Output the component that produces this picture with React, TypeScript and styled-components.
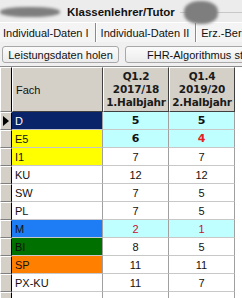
import React from "react";
import styled, { createGlobalStyle } from "styled-components";

const Global = createGlobalStyle`
  html, body { margin: 0; padding: 0; }
  body {
    width: 242px; height: 298px; overflow: hidden;
    background: #f0f0f0;
    font-family: "Liberation Sans", Arial, sans-serif;
  }
`;

const Page = styled.div`
  display: flex;
  flex-direction: column;
  width: 242px;
  height: 298px;
  overflow: hidden;
`;

const TitleBar = styled.div`
  position: relative;
  height: 22px;
  flex: 0 0 22px;
  box-sizing: border-box;
  display: flex;
  align-items: flex-start;
  padding: 4px 0 0 67px;
  background: #ececec;
`;

const TitleLine = styled.div`
  position: absolute;
  left: 180px;
  right: 0;
  top: 12px;
  height: 1px;
  background: #c8c8c8;
`;

const TitleText = styled.span`
  position: relative;
  z-index: 1;
  font-weight: bold;
  font-size: 11.5px;
  line-height: 16px;
  color: #111;
  white-space: nowrap;
`;

const Smudge = styled.span<{ $left: number; $width: number; $top: number; $h: number }>`
  position: absolute;
  z-index: 2;
  left: ${(p) => p.$left}px;
  top: ${(p) => p.$top}px;
  width: ${(p) => p.$width}px;
  height: ${(p) => p.$h}px;
  border-radius: 45%;
  background: #7e7e7e;
  filter: blur(1.5px);
`;

const TabStrip = styled.div`
  height: 20px;
  flex: 0 0 20px;
  box-sizing: border-box;
  display: flex;
  align-items: stretch;
  border-top: 1px solid #ffffff;
  background: #f4f4f4;
  overflow: hidden;
`;

const Tab = styled.div`
  display: flex;
  align-items: center;
  padding: 1px 6px 0 3px;
  font-size: 11px;
  color: #111;
  white-space: nowrap;
  border-right: 1px solid #8a8a8a;
  box-shadow: 1px 0 0 #ffffff;
  margin-right: 2px;
`;

const ButtonRow = styled.div`
  display: flex;
  gap: 6px;
  padding: 4px 0 0 2px;
  flex: 0 0 21px;
  box-sizing: border-box;
  white-space: nowrap;
  overflow: hidden;
`;

const Button = styled.div<{ $w: number; $pad?: number }>`
  flex: 0 0 ${(p) => p.$w}px;
  height: 17px;
  box-sizing: border-box;
  border: 1px solid #a8a8a8;
  border-radius: 3px;
  background: linear-gradient(#fbfbfb, #ececec);
  font-size: 11px;
  color: #111;
  display: flex;
  align-items: center;
  justify-content: ${(p) => (p.$pad ? "flex-start" : "center")};
  padding-left: ${(p) => p.$pad || 0}px;
  overflow: hidden;
`;

const Grid = styled.div`
  margin-top: 3px;
  flex: 1;
  background: #ffffff;
  display: flex;
  flex-direction: column;
  border-top: 1px solid #8a8a8a;
`;

const Row = styled.div<{ $h: number }>`
  display: grid;
  grid-template-columns: 12px 91px 66px 66px;
  height: ${(p) => p.$h}px;
  flex: 0 0 auto;
`;

const Indicator = styled.div`
  background: #d4d0c8;
  border-top: 1px solid #ffffff;
  border-left: 1px solid #ffffff;
  border-bottom: 1px solid #808080;
  border-right: 1px solid #000000;
  display: flex;
  align-items: center;
  justify-content: center;
  box-sizing: border-box;
`;

const HeadCell = styled.div<{ $left?: boolean }>`
  background: #d4d0c8;
  border-top: 1px solid #ffffff;
  border-left: 1px solid #ffffff;
  border-bottom: 1px solid #404040;
  border-right: 1px solid #404040;
  box-sizing: border-box;
  display: flex;
  flex-direction: column;
  justify-content: center;
  align-items: ${(p) => (p.$left ? "flex-start" : "center")};
  padding-left: ${(p) => (p.$left ? 3 : 0)}px;
  font-size: 11px;
  color: #111;
`;

const HeadLine = styled.span`
  font-family: "DejaVu Sans", sans-serif;
  font-weight: bold;
  font-size: 10.5px;
  line-height: 13px;
  color: #1a1a1a;
  letter-spacing: -0.2px;
`;

const FachCell = styled.div<{ $bg: string; $fg: string }>`
  background: ${(p) => p.$bg};
  color: ${(p) => p.$fg};
  font-size: 11px;
  display: flex;
  align-items: center;
  padding-left: 3px;
  box-sizing: border-box;
  border-right: 1px solid #a0a0a0;
  border-bottom: 1px solid #c8c8c8;
`;

const ValueCell = styled.div<{ $bg: string; $fg: string; $bold: boolean }>`
  background: ${(p) => p.$bg};
  color: ${(p) => p.$fg};
  font-size: 11px;
  font-weight: ${(p) => (p.$bold ? "bold" : "normal")};
  font-family: ${(p) => (p.$bold ? '"DejaVu Sans", sans-serif' : '"Liberation Sans", Arial, sans-serif')};
  display: flex;
  align-items: center;
  justify-content: center;
  box-sizing: border-box;
  border-right: 1px solid #a0a0a0;
  border-bottom: 1px solid #c8c8c8;
`;

const Arrow = styled.svg`
  width: 6px;
  height: 10px;
`;

type V = { v: string; red?: string };
type R = { fach: string; bg: string; fg: string; hl: boolean; bold: boolean; a: V; b: V; sel?: boolean };

const CYAN = "#c0ffff";
const rows: R[] = [
  { fach: "D", bg: "#0a246a", fg: "#ffffff", hl: true, bold: true, a: { v: "5" }, b: { v: "5" }, sel: true },
  { fach: "E5", bg: "#ffff00", fg: "#111", hl: true, bold: true, a: { v: "6" }, b: { v: "4", red: "#e82020" } },
  { fach: "I1", bg: "#ffff00", fg: "#111", hl: false, bold: false, a: { v: "7" }, b: { v: "7" } },
  { fach: "KU", bg: "#ffffff", fg: "#111", hl: false, bold: false, a: { v: "12" }, b: { v: "12" } },
  { fach: "SW", bg: "#ffffff", fg: "#111", hl: false, bold: false, a: { v: "7" }, b: { v: "5" } },
  { fach: "PL", bg: "#ffffff", fg: "#111", hl: false, bold: false, a: { v: "7" }, b: { v: "5" } },
  { fach: "M", bg: "#1e7df5", fg: "#111", hl: true, bold: false, a: { v: "2", red: "#c8102e" }, b: { v: "1", red: "#c8102e" } },
  { fach: "BI", bg: "#007000", fg: "#111", hl: false, bold: false, a: { v: "8" }, b: { v: "5" } },
  { fach: "SP", bg: "#ff8000", fg: "#111", hl: false, bold: false, a: { v: "11" }, b: { v: "11" } },
  { fach: "PX-KU", bg: "#ffffff", fg: "#111", hl: false, bold: false, a: { v: "11" }, b: { v: "7" } },
];

export default function App() {
  return (
    <Page>
      <Global />
      <TitleBar>
        <TitleLine />
        <Smudge $left={0} $width={60} $top={7} $h={10} />
        <TitleText>Klassenlehrer/Tutor</TitleText>
        <Smudge $left={184} $width={34} $top={1} $h={23} />
      </TitleBar>
      <TabStrip>
        <Tab>Individual-Daten I</Tab>
        <Tab>Individual-Daten II</Tab>
        <Tab>Erz.-Berichte</Tab>
      </TabStrip>
      <ButtonRow>
        <Button $w={117}>Leistungsdaten holen</Button>
        <Button $w={140} $pad={21}>FHR-Algorithmus starten</Button>
      </ButtonRow>
      <Grid>
        <Row $h={45}>
          <Indicator />
          <HeadCell $left>Fach</HeadCell>
          <HeadCell>
            <HeadLine>Q1.2</HeadLine>
            <HeadLine>2017/18</HeadLine>
            <HeadLine>1.Halbjahr</HeadLine>
          </HeadCell>
          <HeadCell>
            <HeadLine>Q1.4</HeadLine>
            <HeadLine>2019/20</HeadLine>
            <HeadLine>2.Halbjahr</HeadLine>
          </HeadCell>
        </Row>
        {rows.map((r) => (
          <Row $h={18} key={r.fach}>
            <Indicator>
              {r.sel && (
                <Arrow viewBox="0 0 6 10">
                  <path d="M0 0 L6 5 L0 10 Z" fill="#000" />
                </Arrow>
              )}
            </Indicator>
            <FachCell $bg={r.bg} $fg={r.fg}>{r.fach}</FachCell>
            <ValueCell $bg={r.hl ? CYAN : "#ffffff"} $fg={r.a.red || "#111"} $bold={r.bold}>
              {r.a.v}
            </ValueCell>
            <ValueCell $bg={r.hl ? CYAN : "#ffffff"} $fg={r.b.red || "#111"} $bold={r.bold}>
              {r.b.v}
            </ValueCell>
          </Row>
        ))}
        <Row $h={18}>
          <Indicator />
          <FachCell $bg="#ffffff" $fg="#111" />
          <ValueCell $bg="#ffffff" $fg="#111" $bold={false} />
          <ValueCell $bg="#ffffff" $fg="#111" $bold={false} />
        </Row>
      </Grid>
    </Page>
  );
}
